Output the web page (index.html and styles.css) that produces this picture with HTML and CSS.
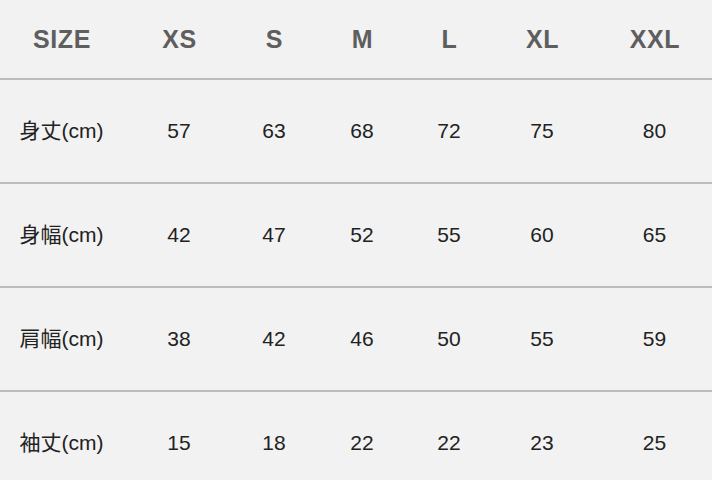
FILE: index.html
```html
<!DOCTYPE html>
<html lang="ja">
<head>
<meta charset="utf-8">
<link rel="stylesheet" href="styles.css">
</head>
<body>
<div class="table">
  <div class="row head">
    <div class="cell">SIZE</div><div class="cell">XS</div><div class="cell">S</div><div class="cell">M</div><div class="cell">L</div><div class="cell">XL</div><div class="cell">XXL</div>
  </div>
  <div class="row">
    <div class="cell">身丈(cm)</div><div class="cell">57</div><div class="cell">63</div><div class="cell">68</div><div class="cell">72</div><div class="cell">75</div><div class="cell">80</div>
  </div>
  <div class="row">
    <div class="cell">身幅(cm)</div><div class="cell">42</div><div class="cell">47</div><div class="cell">52</div><div class="cell">55</div><div class="cell">60</div><div class="cell">65</div>
  </div>
  <div class="row">
    <div class="cell">肩幅(cm)</div><div class="cell">38</div><div class="cell">42</div><div class="cell">46</div><div class="cell">50</div><div class="cell">55</div><div class="cell">59</div>
  </div>
  <div class="row">
    <div class="cell">袖丈(cm)</div><div class="cell">15</div><div class="cell">18</div><div class="cell">22</div><div class="cell">22</div><div class="cell">23</div><div class="cell">25</div>
  </div>
</div>
</body>
</html>
```
FILE: styles.css
```css
html, body {
  margin: 0;
  padding: 0;
  background: #f2f2f2;
}
body {
  width: 712px;
  height: 480px;
  overflow: hidden;
  font-family: "Liberation Sans", "Noto Sans CJK JP", sans-serif;
}
.table {
  display: flex;
  flex-direction: column;
}
.row {
  display: grid;
  grid-template-columns: 123px 112px 78px 98px 76px 110px 115px;
  height: 102px;
  align-items: center;
  border-bottom: 2px solid #bdbdbd;
  font-size: 21px;
  line-height: 24px;
  color: #222;
}
.row.head {
  height: 78px;
  font-size: 25px;
  font-weight: bold;
  letter-spacing: 0.6px;
  color: #5e5e5e;
}
.cell {
  text-align: center;
  white-space: nowrap;
}
.row.head .cell {
  padding-left: 1px;
}
```
